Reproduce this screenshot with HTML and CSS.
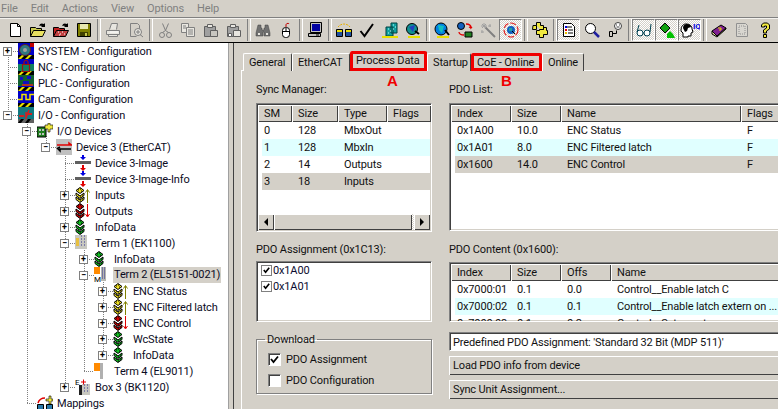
FILE: index.html
```html
<!DOCTYPE html>
<html lang="en">
<head>
<meta charset="utf-8">
<title>TwinCAT System Manager</title>
<link rel="stylesheet" href="styles.css">
</head>
<body>
<svg class="defs" aria-hidden="true">
  <defs>
    <symbol id="stack" viewBox="0 0 10 16">
      <path d="M5 .5l4 3-4 3-4-3z" fill="currentColor" stroke="#000"/>
      <path d="M1 6l4 3 4-3 0 2.500-4 3-4-3z" fill="currentColor" stroke="#000"/>
      <path d="M1 10l4 3 4-3 0 2.500-4 3-4-3z" fill="currentColor" stroke="#000"/>
      <path d="M3 3h1M5 2h1M6 4h1M3 8h1M5 10h1M7 8h1M3 12h1M5 14h1M7 12h1" stroke="#000"/>
    </symbol>
    <symbol id="hatch" viewBox="0 0 16 16">
      <rect width="16" height="16" fill="#0000c8"/>
      <path d="M0 12h16v4H0z" fill="#000"/>
      <path d="M0 16l4-4h3l-4 4zM7 16l4-4h3l-4 4z" fill="#e8e000"/>
    </symbol>
    <symbol id="bar" viewBox="0 0 16 16">
      <path d="M0 6h16v3H0z" fill="#606060"/>
      <path d="M7 0h2v2h2L8 5 5 2h2z" fill="#0000e0"/>
      <path d="M7 10h2v3h2l-3 3-3-3h2z" fill="#e00000"/>
    </symbol>
    <symbol id="term" viewBox="0 0 16 16">
      <rect x="0" y="0" width="6" height="7" fill="#ff8a00"/>
      <rect x="7" y="0" width="5" height="14" fill="#b8b8b0"/>
      <path d="M8 1h1M10 1h1M8 3h1M10 3h1M8 5h1M10 5h1M8 7h1M10 7h1M8 9h1M10 9h1M8 11h1M10 11h1" stroke="#303090"/>
    </symbol>
  </defs>
</svg>

<nav class="menubar">
  <span class="menu m-file">File</span>
  <span class="menu">Edit</span>
  <span class="menu">Actions</span>
  <span class="menu">View</span>
  <span class="menu">Options</span>
  <span class="menu">Help</span>
</nav>

<div class="toolbar">
  <span class="tb"><svg class="ic" viewBox="0 0 16 16"><path d="M3.500 1.500h7l3 3v10h-10z" fill="#fff" stroke="#000"/><path d="M10.500 1.500v3h3" fill="none" stroke="#000"/></svg></span>
  <span class="tb"><svg class="ic" viewBox="0 0 16 16"><path d="M.5 14.500v-9h5l1 1h5v2" fill="#c8c850" stroke="#000"/><path d="M.5 14.500l3-6h12l-3 6z" fill="#e8e060" stroke="#000"/><path d="M9 4c1-3 3-3 5-2l1-1v4h-4l1-1c-1-.5-2-.5-3 0z" fill="#000"/></svg></span>
  <span class="tb"><svg class="ic" viewBox="0 0 16 16"><path d="M.5 14.500v-9h5l1 1h5v2" fill="#c02020" stroke="#000"/><path d="M.5 14.500l3-6h12l-3 6z" fill="#c04040" stroke="#000"/><path d="M5 10h1M7 12h1M9 10h1M11 12h1M6 13h1" stroke="#fff"/><path d="M9 4c1-3 3-3 5-2l1-1v4h-4l1-1c-1-.5-2-.5-3 0z" fill="#000"/></svg></span>
  <span class="tb"><svg class="ic" viewBox="0 0 16 16"><path d="M1.500 1.500h13v13h-13z" fill="#808000" stroke="#000"/><path d="M4 2h8v5H4z" fill="#e8e8b0"/><path d="M4 10h8v4H4z" fill="#404000"/><path d="M9 11h2v3H9z" fill="#c8c850"/></svg></span>
  <span class="tsep"></span>
  <span class="tb"><svg class="ic" viewBox="0 0 16 16"><path d="M4.500 7.500l2-6h6l-1 6M1.500 8.500h13v4h-13zM3.500 12.500v2h9v-2" fill="#e8e6e0" stroke="#808080"/><path d="M5 10h8" stroke="#fff"/></svg></span>
  <span class="tb"><svg class="ic" viewBox="0 0 16 16"><path d="M2.500 1.500h7l2 2v4M2.500 1.500v13h6" fill="none" stroke="#808080"/><circle cx="10" cy="10" r="3.500" fill="#e8e6e0" stroke="#808080"/><path d="M12 12.500l3 2.500M8 10h4M10 8v4" stroke="#808080"/></svg></span>
  <span class="tsep"></span>
  <span class="tb"><svg class="ic" viewBox="0 0 16 16"><path d="M5.500 1.500l3 7 3-7M8.500 8.500l-3 2M8.500 8.500l3 2" fill="none" stroke="#808080"/><circle cx="5" cy="13" r="2.500" fill="none" stroke="#808080"/><circle cx="12" cy="13" r="2.500" fill="none" stroke="#808080"/></svg></span>
  <span class="tb"><svg class="ic" viewBox="0 0 16 16"><path d="M1.500 1.500h7v9h-7z" fill="#e8e6e0" stroke="#808080"/><path d="M6.500 5.500h8v9h-8z" fill="#e8e6e0" stroke="#808080"/><path d="M3 4h3M3 6h3M8 8h5M8 10h5M8 12h5" stroke="#808080"/></svg></span>
  <span class="tb"><svg class="ic" viewBox="0 0 16 16"><path d="M1.500 4.500h11v10h-11z" fill="#a0a0a0" stroke="#606060"/><path d="M4.500 2.500h5v3h-5z" fill="#e8e6e0" stroke="#606060"/><path d="M7.500 8.500h7v6h-7z" fill="#c8c6c0" stroke="#606060"/></svg></span>
  <span class="tb"><svg class="ic" viewBox="0 0 16 16"><path d="M1.500 4.500h11v10h-11z" fill="#a0a0a0" stroke="#606060"/><path d="M4.500 2.500h5v3h-5z" fill="#e8e6e0" stroke="#606060"/><path d="M7.500 8.500h7v6h-7z" fill="#e8e6e0" stroke="#606060"/><path d="M2.500 11.500h3v3h-3z" fill="#fff" stroke="#606060"/></svg></span>
  <span class="tsep"></span>
  <span class="tb"><svg class="ic" viewBox="0 0 16 16"><path d="M3 3h3v3h1v2h2V6h1V3h3l2 8v3h-6v-4H8v4H1v-3z" fill="#707070" stroke="#404040" stroke-width=".5"/><path d="M3 11h2v2H3zM11 11h2v2h-2z" fill="#e8e6e0"/></svg></span>
  <span class="tb"><svg class="ic" viewBox="0 0 16 16"><rect x="4.500" y="5.500" width="7" height="10" rx="3" fill="#fff" stroke="#000"/><path d="M4.500 9.500h7M8 6v3" stroke="#000"/><path d="M8 5V3c0-2 3-2 3-1" fill="none" stroke="#c00000"/></svg></span>
  <span class="tsep"></span>
  <span class="tb"><svg class="ic" viewBox="0 0 16 16"><path d="M3.500 .5h11v10h-11z" fill="#c0c0c0" stroke="#000"/><path d="M5 2h8v7H5z" fill="#0000a0"/><path d="M1.500 11.500h12v3h-12z" fill="#c0c0c0" stroke="#000"/><path d="M9 13h3" stroke="#000"/></svg></span>
  <span class="tsep"></span>
  <span class="tb"><svg class="ic" viewBox="0 0 16 16"><path d="M2 5c3-4 9-4 12 0" fill="none" stroke="#e8b000" stroke-dasharray="2 1"/><path d="M.5 7.500h6v7h-6zM9.500 7.500h6v7h-6z" fill="#2050a0" stroke="#000"/><path d="M1 8h5v2H1zM10 8h5v2h-5z" fill="#e8e000"/></svg></span>
  <span class="tb"><svg class="ic" viewBox="0 0 16 16"><path d="M1.500 9l4 5L14 2" fill="none" stroke="#000" stroke-width="2"/></svg></span>
  <span class="tb"><svg class="ic" viewBox="0 0 16 16"><path d="M9 1h6v10H9zM4 5h7v9H4z" fill="#10a0a0" stroke="#004040"/><path d="M6 7h1M8 9h1M6 11h1M11 3h1M13 5h1M11 7h1" stroke="#c0ffff"/><path d="M0 14h16v2H0z" fill="#e8e000"/></svg></span>
  <span class="tb"><svg class="ic" viewBox="0 0 16 16"><circle cx="7" cy="7" r="5.500" fill="#109090" stroke="#000"/><path d="M4 5l6-2-2 7z" fill="#2040c0"/><path d="M3 14h12v2H3z" fill="#e8e000"/><path d="M10 9l4 3" stroke="#000" stroke-width="2"/></svg></span>
  <span class="tsep"></span>
  <span class="tb"><svg class="ic" viewBox="0 0 16 16"><circle cx="7" cy="7" r="6" fill="#0080e0" stroke="#000"/><path d="M4 3l6 1-2 7-3-3z" fill="#10c0c0"/><path d="M3 14h12v2H3z" fill="#e8e000"/><path d="M11 8l4 5" stroke="#000" stroke-width="2"/></svg></span>
  <span class="tb"><svg class="ic" viewBox="0 0 16 16"><circle cx="4" cy="4" r="3.500" fill="#1060c0" stroke="#000"/><path d="M9 2c3 0 5 1 5 4l1-1M14 6l-2-1" fill="none" stroke="#e00000" stroke-width="1.300"/><path d="M7 13c-3 0-5-1-5-3" fill="none" stroke="#e00000" stroke-width="1.300"/><path d="M8 10h7v5H8z" fill="#208020" stroke="#000"/></svg></span>
  <span class="tb"><svg class="ic" viewBox="0 0 16 16"><path d="M5 5l10 10" stroke="#808080" stroke-width="2"/><path d="M4 1v3M1 4h6M2 2l4 4M6 2L2 6M10 2v3M8 4h3M1 10h3M2 8v3" stroke="#a0a0a0"/></svg></span>
  <span class="tb on"><svg class="ic" viewBox="0 0 16 16"><circle cx="8" cy="8" r="7" fill="none" stroke="#e02020" stroke-width="1.200" stroke-dasharray="6 2"/><circle cx="8" cy="8" r="4" fill="#1060c0"/><path d="M6 6h3v3H6z" fill="#20a0a0"/><path d="M9 9l3 3" stroke="#000"/></svg></span>
  <span class="tsep"></span>
  <span class="tb"><svg class="ic" viewBox="0 0 16 16"><path d="M4.500 3.500v-3h4v3h3v4h-3M1 3.500h3.500v4h-4zM7.500 7.500h4v-2h3v3h1v4h-4v3h-4v-3h-3v-4h3z" fill="#f0e840" stroke="#000"/></svg></span>
  <span class="tsep"></span>
  <span class="tb on"><svg class="ic" viewBox="0 0 16 16"><path d="M2.500 1.500h8l3 3v10h-11z" fill="#fff" stroke="#000"/><path d="M5 5h6M7 8h5M7 11h5" stroke="#000"/><path d="M4 7h2v2H4z" fill="#e00000"/><path d="M4 4h2v2H4z" fill="#0000e0"/><path d="M4 10h2v2H4z" fill="#e8c000"/></svg></span>
  <span class="tb"><svg class="ic" viewBox="0 0 16 16"><circle cx="6.500" cy="6.500" r="5" fill="#fff" stroke="#000"/><path d="M10 10l5 5" stroke="#2020a0" stroke-width="2.500"/></svg></span>
  <span class="tb"><svg class="ic" viewBox="0 0 16 16"><circle cx="11" cy="4" r="3.500" fill="#fff" stroke="#404040"/><path d="M9 3h1M12 3h1M9.500 5h3" stroke="#404040"/><path d="M2.500 9.500h3v5h-3zM5.500 11.500h4v-3" fill="none" stroke="#000"/></svg></span>
  <span class="tsep"></span>
  <span class="tb on"><svg class="ic" viewBox="0 0 16 16"><circle cx="4" cy="11" r="3" fill="#fff" stroke="#004050"/><circle cx="11" cy="11" r="3" fill="#fff" stroke="#004050"/><path d="M7 11h1M1 10l2-7M14 10l1-8" fill="none" stroke="#004050"/></svg></span>
  <span class="tb on"><svg class="ic" viewBox="0 0 16 16"><path d="M6 1l5 5-5 5-5-5z" fill="#10a010" stroke="#000"/><path d="M8 11l3-3 3 3 2 4h-8z" fill="#00c000" transform="translate(0 1)"/></svg></span>
  <span class="tb on"><svg class="ic ic-wide" viewBox="0 0 20 16"><path d="M3 15V11L1 9c0-6 3-7 5-7 4 0 6 2 6 5l1 3-2 1v3H8v1z" fill="#fff" stroke="#000"/><path d="M3 6c0-3 2-4 4-4 2 0 4 1 4 3L8 6l-1 3-2 1z" fill="#000"/><text class="iq" x="13" y="7">IQ</text></svg></span>
  <span class="tsep"></span>
  <span class="tb"><svg class="ic" viewBox="0 0 16 16"><path d="M1 9l9-6 5 3-9 8z" fill="#802090" stroke="#000"/><path d="M1 9v3l5 3 9-8V6l-9 8z" fill="#e8e0a0" stroke="#000"/><path d="M7 6h3v2H8" fill="none" stroke="#e8e000"/></svg></span>
  <span class="tb"><svg class="ic" viewBox="0 0 16 16"><path d="M2.500 1.500h9l2 2v11h-11z" fill="#d8d6d0" stroke="#909090"/><path d="M5 4h6v8H5z" fill="none" stroke="#909090" stroke-dasharray="1 1"/></svg></span>
  <span class="tb"><svg class="ic" viewBox="0 0 16 16"><path d="M4.500 5V3l2-2h4l2 2v4l-3 2v2h-3V8l3-2V4H7.500v1z" fill="#f0e840" stroke="#000"/><path d="M6.500 12.500h3v3h-3z" fill="#f0e840" stroke="#000"/></svg></span>
</div>

<main class="main">
  <div class="tree">
    <svg class="lines" viewBox="0 0 228 366" aria-hidden="true">
      <path d="M8.500 8V72M13 8.500h5M8 24.500h10M8 40.500h10M8 56.500h10M13 72.500h5M27.500 77V360.500M32 88.500h5M27 360.500h10M46.500 93V104.500M51 104.500h5M65.500 109V344.500M65 120.500h10M65 136.500h10M70 152.500h5M70 168.500h5M70 184.500h5M70 200.500h5M70 344.500h5M84.500 205V328.500M89 216.500h5M89 232.500h5M84 328.500h10M103.500 237V312.500M108 248.500h5M108 264.500h5M108 280.500h5M108 296.500h5M108 312.500h5" fill="none" stroke="#808080" stroke-dasharray="1 1"/>
    </svg>
    <div class="node l0"><span class="bx">+</span><svg class="ni" viewBox="0 0 16 16"><use href="#hatch"/><circle cx="7" cy="7" r="5.500" fill="#307880" stroke="#602020"/><circle cx="7" cy="7" r="2" fill="#a0a0a0"/><path d="M12 0h4v4h-4z" fill="#c00000"/></svg><span class="nt">SYSTEM - Configuration</span></div>
    <div class="node l0"><span class="nb"></span><svg class="ni" viewBox="0 0 16 16"><use href="#hatch"/><path d="M0 5h16v7H0z" fill="#108060"/><path d="M4.500 5.500h7v7h-7zM6 5V3c0-2 4-2 4 0v2" fill="none" stroke="#a01010" stroke-width="1.200"/></svg><span class="nt">NC - Configuration</span></div>
    <div class="node l0"><span class="nb"></span><svg class="ni" viewBox="0 0 16 16"><use href="#hatch"/><path d="M0 0h16v11H0z" fill="#106030"/><path d="M2 2h3v3H2zM9 1h4v3H9zM5 6h6v3H5z" fill="#1010c0"/><path d="M4 10h11" stroke="#e02020" stroke-width="1.500"/></svg><span class="nt">PLC - Configuration</span></div>
    <div class="node l0"><span class="nb"></span><svg class="ni" viewBox="0 0 16 16"><use href="#hatch"/><path d="M0 8.500h4v-5h4v5h4v-5h4" fill="none" stroke="#f0e000" stroke-width="1.500"/></svg><span class="nt">Cam - Configuration</span></div>
    <div class="node l0"><span class="bx">&minus;</span><svg class="ni" viewBox="0 0 16 16"><path d="M0 0h16v6H0z" fill="#107880"/><path d="M0 6h16v6H0z" fill="#107880"/><path d="M1 8h5v2H1zM9 6h5v2H9z" fill="#d02020"/><path d="M8 5v7M11 3l-3 8" stroke="#d02020" stroke-width="1.500"/><path d="M0 12h16v4H0z" fill="#606060"/><path d="M0 16l3-4h3l-3 4zM7 16l3-4h3l-3 4z" fill="#000"/></svg><span class="nt">I/O - Configuration</span></div>
    <div class="node l1"><span class="bx">&minus;</span><svg class="ni" viewBox="0 0 16 16"><path d="M0 4h9v10H0z" fill="#208020" stroke="#000"/><path d="M2 6h2v2H2zM5 6h2v2H5zM2 10h2v2H2zM5 10h2v2H5z" fill="#c0c0c0"/><path d="M8 2h3V0h2v2h3v4h-3v3h-2V6H8z" fill="#f0e840" stroke="#000" stroke-width=".6"/></svg><span class="nt">I/O Devices</span></div>
    <div class="node l2"><span class="bx">&minus;</span><svg class="ni" viewBox="0 0 16 16"><rect width="16" height="16" fill="#c0c0c0"/><path d="M1 6h12v-2l3 2.500M1 6h14" fill="none" stroke="#e00000" stroke-width="1.500"/><path d="M15 10H4v2l-2.500-2.500L4 8" fill="none" stroke="#000" stroke-width="1.500"/></svg><span class="nt">Device 3 (EtherCAT)</span></div>
    <div class="node l3"><span class="nb"></span><svg class="ni" viewBox="0 0 16 16"><use href="#bar"/></svg><span class="nt">Device 3-Image</span></div>
    <div class="node l3"><span class="nb"></span><svg class="ni" viewBox="0 0 16 16"><use href="#bar"/></svg><span class="nt">Device 3-Image-Info</span></div>
    <div class="node l3"><span class="bx">+</span><svg class="ni"><use href="#stack" width="10" height="16" class="yl"/><path class="au" d="M12.500 16V3M10.500 5.500l2-3 2 3"/></svg><span class="nt">Inputs</span></div>
    <div class="node l3"><span class="bx">+</span><svg class="ni"><use href="#stack" width="10" height="16" class="rd"/><path class="ad" d="M12.500 1v12M10.500 11l2 3 2-3"/></svg><span class="nt">Outputs</span></div>
    <div class="node l3"><span class="bx">+</span><svg class="ni"><use href="#stack" width="10" height="16" class="gr"/></svg><span class="nt">InfoData</span></div>
    <div class="node l3"><span class="bx">&minus;</span><svg class="ni" viewBox="0 0 16 16"><path d="M0 0h12v14H0z" fill="#c8c8c0"/><path d="M1 3h3v8H1z" fill="#e8c040"/><path d="M6 1h1M9 1h1M6 4h1M9 4h1M6 7h1M9 7h1M6 10h1M9 10h1" stroke="#303090"/></svg><span class="nt">Term 1 (EK1100)</span></div>
    <div class="node l4"><span class="bx">+</span><svg class="ni"><use href="#stack" width="10" height="16" class="gr"/></svg><span class="nt">InfoData</span></div>
    <div class="node l4"><span class="bx">&minus;</span><svg class="ni" viewBox="0 0 16 16"><use href="#term"/><text class="mm" x="0" y="15">M</text></svg><span class="nt sel">Term 2 (EL5151-0021)</span></div>
    <div class="node l5"><span class="bx">+</span><svg class="ni"><use href="#stack" width="10" height="16" class="yl"/><path class="au" d="M12.500 16V3M10.500 5.500l2-3 2 3"/></svg><span class="nt">ENC Status</span></div>
    <div class="node l5"><span class="bx">+</span><svg class="ni"><use href="#stack" width="10" height="16" class="yl"/><path class="au" d="M12.500 16V3M10.500 5.500l2-3 2 3"/></svg><span class="nt">ENC Filtered latch</span></div>
    <div class="node l5"><span class="bx">+</span><svg class="ni"><use href="#stack" width="10" height="16" class="rd"/><path class="ad" d="M12.500 1v12M10.500 11l2 3 2-3"/></svg><span class="nt">ENC Control</span></div>
    <div class="node l5"><span class="bx">+</span><svg class="ni"><use href="#stack" width="10" height="16" class="gr"/></svg><span class="nt">WcState</span></div>
    <div class="node l5"><span class="bx">+</span><svg class="ni"><use href="#stack" width="10" height="16" class="gr"/></svg><span class="nt">InfoData</span></div>
    <div class="node l4"><span class="nb"></span><svg class="ni" viewBox="0 0 16 16"><path d="M0 0h6v8H0z" fill="#ff8a00"/><path d="M6 0h3v16H6z" fill="#b0b0b0"/></svg><span class="nt">Term 4 (EL9011)</span></div>
    <div class="node l3"><span class="bx">+</span><svg class="ni" viewBox="0 0 16 16"><path d="M7 5h8v11H7z" fill="#c8c8c0"/><path d="M4 6h3v10H4z" fill="#202020"/><path d="M9 6h1M12 6h1M9 9h1M12 9h1M9 12h1M12 12h1" stroke="#303090"/><text class="mm red" x="0" y="6">E</text><path d="M6 3h5M8.500 .5v5" stroke="#e00000"/></svg><span class="nt">Box 3 (BK1120)</span></div>
    <div class="node l1"><span class="nb"></span><svg class="ni" viewBox="0 0 16 16"><path d="M1 8c1-3 4-5 7-5" fill="none" stroke="#e00000" stroke-width="1.500"/><path d="M.5 9.500h6v6h-6zM9.500 9.500h6v6h-6z" fill="#2878a8" stroke="#000"/><path d="M9 4h3V1h2v3h2v2h-2v3h-2V6H9z" fill="#f0e840" stroke="#000" stroke-width=".6"/></svg><span class="nt">Mappings</span></div>
  </div>

  <section class="panel">
    <span class="mark mark-a">A</span>
    <span class="mark mark-b">B</span>
    <div class="tabs">
      <span class="tab t-gen">General</span>
      <span class="tab t-eth">EtherCAT</span>
      <span class="tab t-pd active hl">Process Data</span>
      <span class="tab t-st">Startup</span>
      <span class="tab t-coe hl">CoE - Online</span>
      <span class="tab t-on">Online</span>
    </div>
    <div class="page">
      <div class="col">
        <div class="label">Sync Manager:</div>
        <div class="list h-129">
          <div class="hrow sm"><span>SM</span><span>Size</span><span>Type</span><span>Flags</span></div>
          <div class="row sm"><span>0</span><span>128</span><span>MbxOut</span><span></span></div>
          <div class="row sm cy"><span>1</span><span>128</span><span>MbxIn</span><span></span></div>
          <div class="row sm"><span>2</span><span>14</span><span>Outputs</span><span></span></div>
          <div class="row sm gy"><span>3</span><span>18</span><span>Inputs</span><span></span></div>
          <div class="scroll">
            <span class="sb"><i class="al"></i></span>
            <span class="thumb"></span>
            <span class="dith"></span>
            <span class="sb"><i class="ar"></i></span>
          </div>
        </div>
        <div class="label mt-11">PDO Assignment (0x1C13):</div>
        <div class="list h-61 plain">
          <div class="chk"><span class="cb"><svg viewBox="0 0 10 10"><path d="M2 4.500l2 2.500 4-5" fill="none" stroke="#000" stroke-width="1.800"/></svg></span>0x1A00</div>
          <div class="chk"><span class="cb"><svg viewBox="0 0 10 10"><path d="M2 4.500l2 2.500 4-5" fill="none" stroke="#000" stroke-width="1.800"/></svg></span>0x1A01</div>
        </div>
        <fieldset class="group">
          <legend>Download</legend>
          <div class="opt"><span class="cb3"><svg viewBox="0 0 9 9"><path d="M1 4l2.500 3L8 1.500" fill="none" stroke="#000" stroke-width="1.800"/></svg></span>PDO Assignment</div>
          <div class="opt"><span class="cb3"></span>PDO Configuration</div>
        </fieldset>
      </div>
      <div class="col">
        <div class="label">PDO List:</div>
        <div class="list h-128">
          <div class="hrow pl"><span>Index</span><span>Size</span><span>Name</span><span>Flags</span></div>
          <div class="row pl"><span>0x1A00</span><span>10.0</span><span>ENC Status</span><span>F</span></div>
          <div class="row pl cy"><span>0x1A01</span><span>8.0</span><span>ENC Filtered latch</span><span>F</span></div>
          <div class="row pl gy"><span>0x1600</span><span>14.0</span><span>ENC Control</span><span>F</span></div>
        </div>
        <div class="label mt-12">PDO Content (0x1600):</div>
        <div class="list h-60">
          <div class="hrow pc"><span>Index</span><span>Size</span><span>Offs</span><span>Name</span></div>
          <div class="row pc"><span>0x7000:01</span><span>0.1</span><span>0.0</span><span>Control__Enable latch C</span></div>
          <div class="row pc cy"><span>0x7000:02</span><span>0.1</span><span>0.1</span><span>Control__Enable latch extern on ...</span></div>
          <div class="row pc"><span>0x7000:03</span><span>0.1</span><span>0.2</span><span>Control__Set counter</span></div>
        </div>
        <div class="field">Predefined PDO Assignment: 'Standard 32 Bit (MDP 511)'</div>
        <div class="btn">Load PDO info from device</div>
        <div class="btn">Sync Unit Assignment...</div>
      </div>
    </div>
  </section>
</main>
</body>
</html>
```

FILE: styles.css
```css
* { box-sizing: border-box; }
html, body { margin: 0; padding: 0; }
body {
  width: 778px;
  height: 409px;
  overflow: hidden;
  background: #d4d0c8;
  color: #111;
  font-family: Roboto, "Liberation Sans", Arial, sans-serif;
  font-size: 11px;
  letter-spacing: -.15px;
  line-height: 13px;
}
.defs { position: absolute; width: 0; height: 0; }

/* menu */
.menubar { display: flex; height: 17px; align-items: center; color: #808080; gap: 13px; }
.m-file { margin-left: 1px; }

/* toolbar */
.toolbar {
  display: flex;
  align-items: center;
  height: 25px;
  padding: 0 0 0 3px;
  border-top: 1px solid #808080;
  box-shadow: inset 0 1px 0 #f4f2ee;
}
.tb { width: 23px; height: 22px; flex: none; display: flex; align-items: center; justify-content: center; }
.ic { width: 16px; height: 16px; display: block; }
.ic-wide { width: 20px; }
.iq { font-size: 8px; font-weight: 700; fill: #0000e0; }
.tsep { width: 6px; height: 22px; flex: none; }
.tsep::after { content: ""; display: block; width: 2px; height: 22px; margin-left: 2px; border-left: 1px solid #808080; border-right: 1px solid #fff; }
.tb.on {
  background: repeating-conic-gradient(#fff 0 25%, #d4d0c8 0 50%) 0 0 / 2px 2px;
  border: 1px solid;
  border-color: #808080 #fff #fff #808080;
}

/* main */
.main { display: flex; height: 367px; border-top: 1px solid #000; }
.tree {
  position: relative;
  flex: none;
  width: 229px;
  height: 366px;
  background: #fff;
  border-right: 1px solid #a0a0a0;
  overflow: hidden;
}
.lines { position: absolute; left: 0; top: 0; width: 228px; height: 366px; }
.node { position: relative; display: flex; align-items: center; height: 16px; white-space: nowrap; color: #0c0c24; }
.l0 { padding-left: 3px; }
.l1 { padding-left: 22px; }
.l2 { padding-left: 41px; }
.l3 { padding-left: 60px; }
.l4 { padding-left: 79px; }
.l5 { padding-left: 98px; }
.bx {
  flex: none;
  width: 9px;
  height: 9px;
  margin-right: 6px;
  background: #fff;
  border: 1px solid #808080;
  font-size: 9px;
  line-height: 7px;
  text-align: center;
  color: #000;
  font-weight: 700;
}
.nb { flex: none; width: 9px; margin-right: 6px; }
.ni { flex: none; width: 16px; height: 16px; display: block; }
.nt { margin-left: 4px; }
.sel { background: #d4d0c8; margin-left: 3px; padding: 0 1px; height: 16px; line-height: 16px; }
.yl { color: #f0e020; }
.rd { color: #d00000; }
.gr { color: #10c020; }
.au { fill: none; stroke: #808000; }
.ad { fill: none; stroke: #e00000; }
.mm { font-size: 8px; fill: #000; }

/* right panel */
.panel {
  position: relative;
  flex: none;
  margin-left: 4px;
  width: 545px;
  height: 366px;
  padding: 8px 0 0 7px;
  border-left: 1px solid #404040;
  overflow: hidden;
}
.mark { position: absolute; top: 30px; font-family: "Liberation Sans", Arial, sans-serif; font-weight: 700; font-size: 15px; line-height: 15px; color: #f00000; letter-spacing: 0; }
.mark-a { left: 153px; }
.mark-b { left: 267px; }

.tabs { display: flex; align-items: flex-end; height: 20px; padding-left: 2px; position: relative; z-index: 1; }
.tab {
  flex: none;
  height: 18px;
  padding: 2px 0 0 5px;
  background: #d4d0c8;
  border-top: 1px solid #fff;
  border-left: 1px solid #fff;
  border-right: 1px solid #404040;
  border-radius: 2px 2px 0 0;
  white-space: nowrap;
}
.t-gen { width: 49px; }
.t-eth { width: 58px; }
.t-pd { width: 77px; }
.t-st { width: 44px; }
.t-coe { width: 71px; }
.t-on { width: 42px; }
.active { height: 20px; padding-top: 2px; }
.hl { outline: 3px solid #f00000; outline-offset: -3px; padding-left: 5px; }

.page {
  display: grid;
  grid-template-columns: 176px 340px;
  column-gap: 17px;
  height: 340px;
  padding: 12px 0 0 14px;
  margin-top: -1px;
  border-top: 1px solid #fff;
  border-left: 1px solid #fff;
}
.col { min-width: 0; }
.label { height: 13px; margin-bottom: 7px; white-space: nowrap; }
.mt-11 { margin-top: 11px; margin-bottom: 5px; }
.mt-12 { margin-top: 12px; margin-bottom: 6px; }

.list {
  position: relative;
  overflow: hidden;
  background: #fff;
  border: 1px solid;
  border-color: #808080 #fff #fff #808080;
  box-shadow: inset 1px 1px 0 #404040, inset -1px -1px 0 #d4d0c8;
  padding: 1px 1px 0 1px;
}
.h-129 { height: 129px; }
.h-128 { height: 128px; }
.h-61 { height: 61px; }
.h-60 { height: 60px; }
.plain { padding: 0 2px; }

.hrow, .row { display: grid; white-space: nowrap; }
.hrow { height: 17px; }
.hrow span {
  height: 17px;
  padding: 2px 0 0 6px;
  background: #d4d0c8;
  box-shadow: inset 1px 1px 0 #fff, inset -1px -1px 0 #404040;
}
.row { height: 17px; margin-left: 4px; align-items: center; }
.row span { padding-left: 6px; overflow: hidden; }
.row span:first-child { padding-left: 2px; }
.cy { background: #e0ffff; }
.gy { background: #d4d0c8; }
.hrow.sm { grid-template-columns: 34px 46px 49px 44px; }
.row.sm { grid-template-columns: 30px 46px 49px 44px; }
.hrow.pl { grid-template-columns: 60px 50px 180px 40px; }
.row.pl { grid-template-columns: 56px 50px 180px 40px; }
.hrow.pc { grid-template-columns: 60px 50px 50px 180px; }
.row.pc { grid-template-columns: 56px 50px 50px 180px; }

.scroll { position: absolute; left: 1px; right: 1px; bottom: 1px; display: flex; height: 16px; background: #d4d0c8; }
.sb { flex: none; width: 16px; height: 16px; display: flex; align-items: center; justify-content: center; background: #d4d0c8; box-shadow: inset 1px 1px 0 #fff, inset -1px -1px 0 #404040; }
.thumb { flex: none; width: 138px; box-shadow: inset 1px 1px 0 #fff, inset -1px -1px 0 #404040; }
.dith { flex: 1; background: repeating-conic-gradient(#fff 0 25%, #d4d0c8 0 50%) 0 0 / 2px 2px; }
.al, .ar { width: 0; height: 0; border: 4px solid transparent; }
.al { border-right-color: #000; border-left: 0; }
.ar { border-left-color: #000; border-right: 0; }

.chk { display: flex; align-items: center; height: 16px; padding-left: 2px; color: #0c0c30; }
.cb { flex: none; width: 11px; height: 11px; margin-right: 1px; background: #fff; border: 1px solid #808080; }
.cb svg, .cb3 svg { display: block; width: 100%; height: 100%; }

.group {
  position: relative;
  height: 61px;
  margin: 11px 0 0;
  padding: 3px 0 0 11px;
  border: 1px solid #808080;
  box-shadow: 1px 1px 0 #fff, inset 1px 1px 0 #fff;
  min-width: 0;
}
.group legend { padding: 0 2px; margin-left: -3px; height: 13px; line-height: 13px; }
.opt { display: flex; align-items: center; height: 21px; }
.cb3 {
  flex: none;
  width: 13px;
  height: 13px;
  margin-right: 5px;
  padding: 1px;
  background: #fff;
  border: 1px solid;
  border-color: #808080 #fff #fff #808080;
  box-shadow: inset 1px 1px 0 #404040;
}

.field {
  height: 19px;
  margin-top: 10px;
  padding: 3px 0 0 3px;
  background: #fff;
  white-space: nowrap;
  border: 1px solid;
  border-color: #808080 #fff #fff #808080;
  box-shadow: inset 1px 1px 0 #404040;
}
.btn {
  height: 19px;
  margin-top: 5px;
  padding: 3px 0 0 4px;
  white-space: nowrap;
  box-shadow: inset 1px 1px 0 #fff, inset -1px -1px 0 #404040;
}
```
